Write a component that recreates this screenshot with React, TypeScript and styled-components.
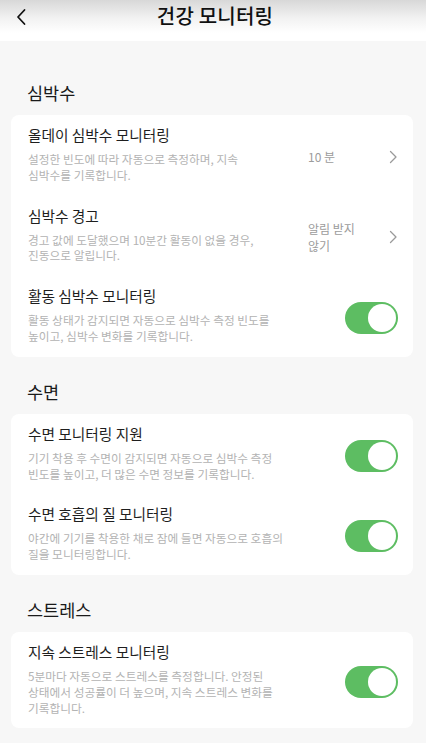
import React from 'react';
import styled, { createGlobalStyle } from 'styled-components';

const GlobalStyle = createGlobalStyle`
  html, body {
    margin: 0;
    padding: 0;
    background: #f7f7f7;
    font-family: "Noto Sans CJK KR", "Noto Sans", sans-serif;
  }
`;

const Page = styled.div`
  width: 426px;
  min-height: 743px;
  background: #f7f7f7;
`;

const Header = styled.header`
  position: relative;
  height: 41px;
  display: flex;
  align-items: center;
  justify-content: center;
  background: linear-gradient(#d8d8d8 0%, #f2f2f2 45%, #ffffff 80%);
`;

const BackButton = styled.button`
  position: absolute;
  left: 11px;
  top: 5px;
  width: 20px;
  height: 24px;
  padding: 0;
  border: none;
  background: none;
  display: flex;
  align-items: center;
  justify-content: center;
`;

const Title = styled.h1`
  margin: 0 0 10px 4px;
  font-size: 20px;
  font-weight: 500;
  color: #111;
  letter-spacing: 0.2px;
`;

const Content = styled.main`
  padding-top: 17px;
`;

const SectionTitle = styled.h2`
  margin: 0;
  padding: 23px 0 10px 27px;
  font-size: 17.5px;
  line-height: 24px;
  font-weight: 400;
  color: #1a1a1a;
`;

const Card = styled.section`
  margin: 0 13px 0 11px;
  background: #fff;
  border-radius: 8px;
`;

const Row = styled.div`
  display: flex;
  align-items: center;
  padding: 10px 15px 13px 17px;
`;

const Texts = styled.div`
  flex: 1;
`;

const RowTitle = styled.div`
  font-size: 14.7px;
  line-height: 20px;
  color: #1e1e1e;
  margin-bottom: 6px;
`;

const Desc = styled.div`
  font-size: 11.7px;
  line-height: 15.8px;
  color: #b3b3b3;
`;

const Value = styled.div`
  display: flex;
  align-items: center;
  margin-top: 6px;
`;

const ValueText = styled.div`
  width: 80px;
  font-size: 12px;
  line-height: 17px;
  color: #9c9c9c;
`;

const Track = styled.div<{ $on: boolean }>`
  position: relative;
  width: 53px;
  height: 32px;
  border-radius: 16px;
  margin-top: 6px;
  background: ${({ $on }) => ($on ? '#5dbd62' : '#ddd')};
  flex-shrink: 0;
`;

const Knob = styled.div<{ $on: boolean }>`
  position: absolute;
  top: 2px;
  left: ${({ $on }) => ($on ? '23px' : '2px')};
  width: 28px;
  height: 28px;
  border-radius: 50%;
  background: #fff;
`;

type Item = {
  title: string;
  desc: string[];
  value?: string[];
  toggle?: boolean;
};

type Section = { title: string; items: Item[] };

const sections: Section[] = [
  {
    title: '심박수',
    items: [
      {
        title: '올데이 심박수 모니터링',
        desc: ['설정한 빈도에 따라 자동으로 측정하며, 지속', '심박수를 기록합니다.'],
        value: ['10 분'],
      },
      {
        title: '심박수 경고',
        desc: ['경고 값에 도달했으며 10분간 활동이 없을 경우,', '진동으로 알립니다.'],
        value: ['알림 받지', '않기'],
      },
      {
        title: '활동 심박수 모니터링',
        desc: ['활동 상태가 감지되면 자동으로 심박수 측정 빈도를', '높이고, 심박수 변화를 기록합니다.'],
        toggle: true,
      },
    ],
  },
  {
    title: '수면',
    items: [
      {
        title: '수면 모니터링 지원',
        desc: ['기기 착용 후 수면이 감지되면 자동으로 심박수 측정', '빈도를 높이고, 더 많은 수면 정보를 기록합니다.'],
        toggle: true,
      },
      {
        title: '수면 호흡의 질 모니터링',
        desc: ['야간에 기기를 착용한 채로 잠에 들면 자동으로 호흡의', '질을 모니터링합니다.'],
        toggle: true,
      },
    ],
  },
  {
    title: '스트레스',
    items: [
      {
        title: '지속 스트레스 모니터링',
        desc: [
          '5분마다 자동으로 스트레스를 측정합니다. 안정된',
          '상태에서 성공률이 더 높으며, 지속 스트레스 변화를',
          '기록합니다.',
        ],
        toggle: true,
      },
    ],
  },
];

const Chevron = () => (
  <svg width="10" height="14" viewBox="0 0 10 14">
    <path d="M2.5 1.5 L8 7 L2.5 12.5" fill="none" stroke="#9a9a9a" strokeWidth="1.3" strokeLinecap="round" strokeLinejoin="round" />
  </svg>
);

const SettingRow = ({ item }: { item: Item }) => (
  <Row>
    <Texts>
      <RowTitle>{item.title}</RowTitle>
      <Desc>
        {item.desc.map((line) => (
          <div key={line}>{line}</div>
        ))}
      </Desc>
    </Texts>
    {item.value && (
      <Value>
        <ValueText>
          {item.value.map((line) => (
            <div key={line}>{line}</div>
          ))}
        </ValueText>
        <Chevron />
      </Value>
    )}
    {item.toggle !== undefined && (
      <Track $on={item.toggle}>
        <Knob $on={item.toggle} />
      </Track>
    )}
  </Row>
);

const App = () => {
  return (
    <Page>
      <GlobalStyle />
      <Header>
        <BackButton aria-label="back">
          <svg width="12" height="18" viewBox="0 0 12 18">
            <path d="M9.5 2 L3 9 L9.5 16" fill="none" stroke="#111" strokeWidth="1.8" strokeLinecap="round" strokeLinejoin="round" />
          </svg>
        </BackButton>
        <Title>건강 모니터링</Title>
      </Header>
      <Content>
        {sections.map((section) => (
          <div key={section.title}>
            <SectionTitle>{section.title}</SectionTitle>
            <Card>
              {section.items.map((item) => (
                <SettingRow key={item.title} item={item} />
              ))}
            </Card>
          </div>
        ))}
      </Content>
    </Page>
  );
};

export default App;
